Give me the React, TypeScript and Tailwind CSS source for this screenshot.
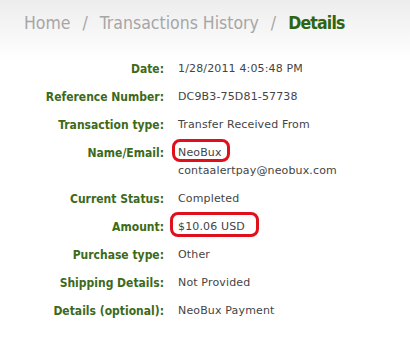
const rows: { label: string; value: string; extra?: string; mark?: "name" | "amount" }[] = [
  { label: "Date:", value: "1/28/2011 4:05:48 PM" },
  { label: "Reference Number:", value: "DC9B3-75D81-57738" },
  { label: "Transaction type:", value: "Transfer Received From" },
  { label: "Name/Email:", value: "NeoBux", extra: "contaalertpay@neobux.com", mark: "name" },
  { label: "Current Status:", value: "Completed" },
  { label: "Amount:", value: "$10.06 USD", mark: "amount" },
  { label: "Purchase type:", value: "Other" },
  { label: "Shipping Details:", value: "Not Provided" },
  { label: "Details (optional):", value: "NeoBux Payment" },
];

const App = () => {
  return (
    <div className="w-[410px] h-[337px] bg-gradient-to-b from-[#ededed] via-white via-[18%] to-white overflow-hidden">
      {/* breadcrumb */}
      <div
        className="pl-[24px] pt-[10px] h-[55px] text-[17.5px] text-[#a6a6a6] whitespace-nowrap"
        style={{ fontFamily: '"DejaVu Sans Condensed", "DejaVu Sans", sans-serif', fontStretch: "condensed" }}
      >
        Home
        <span className="px-[12px]">/</span>
        Transactions History
        <span className="px-[12px]">/</span>
        <span className="font-bold text-[#2f6410] tracking-[-0.8px]">Details</span>
      </div>

      {/* details table */}
      <div className="grid grid-cols-[164px_1fr] gap-x-[14px]">
        {rows.map((r) => (
          <div key={r.label} className="contents">
            <div
              className="text-right font-bold text-[12px] text-[#3d6a1a] py-[7px] leading-[14px]"
              style={{ fontFamily: '"DejaVu Sans Condensed", "DejaVu Sans", sans-serif', fontStretch: "condensed" }}
            >
              {r.label}
            </div>
            <div
              className="text-[11px] text-[#444] tracking-[0.15px] py-[7px] leading-[14px]"
              style={{ fontFamily: '"DejaVu Sans", sans-serif' }}
            >
              <span className="relative">
                {r.value}
                {r.mark === "name" && (
                  <span className="absolute left-[-6px] right-[-8px] top-[-7px] bottom-[-3px] border-[3px] border-[#e0101a] rounded-[8px]" />
                )}
                {r.mark === "amount" && (
                  <span className="absolute left-[-8px] right-[-14px] top-[-8px] bottom-[-4px] border-[3px] border-[#e0101a] rounded-[8px]" />
                )}
              </span>
              {r.extra && <div className="mt-[4px]">{r.extra}</div>}
            </div>
          </div>
        ))}
      </div>
    </div>
  );
};

export default App;
